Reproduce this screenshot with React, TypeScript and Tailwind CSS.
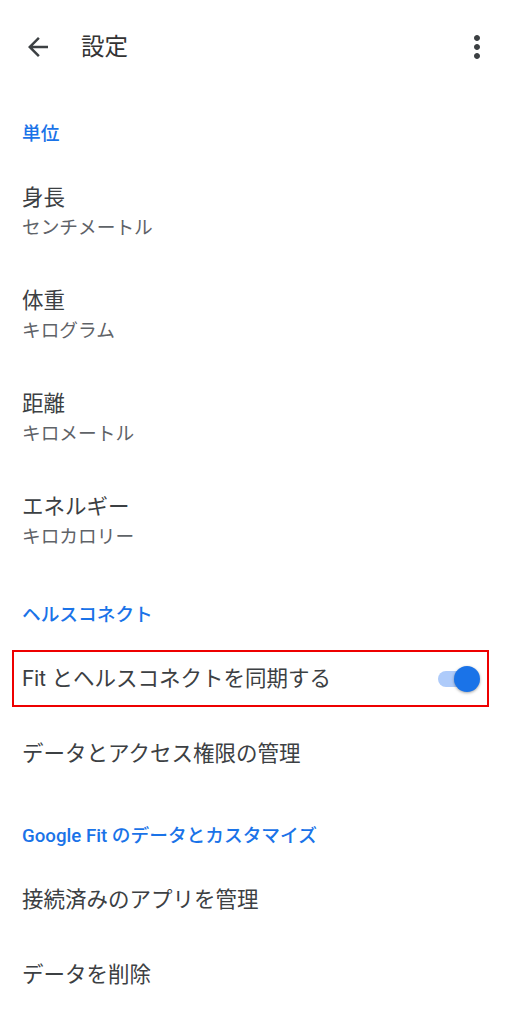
const FONT = "font-['Roboto','Noto_Sans_CJK_JP',sans-serif]"

function SectionLabel({ text, className }: { text: string; className: string }) {
  return (
    <div className={`flex items-start pl-[22px] ${className}`}>
      <span className="text-[18.7px] leading-[24px] font-medium text-[#1a73e8]">{text}</span>
    </div>
  )
}

function TwoLine({ title, sub }: { title: string; sub: string }) {
  return (
    <div className="flex h-[103px] flex-col justify-center pl-[22px]">
      <span className="text-[21.5px] leading-[28px] text-[#3c4043]">{title}</span>
      <span className="mt-1 text-[18.7px] leading-[24px] text-[#5f6368]">{sub}</span>
    </div>
  )
}

function OneLine({ title, className }: { title: string; className: string }) {
  return (
    <div className={`flex items-center pl-[22px] ${className}`}>
      <span className="text-[21.5px] leading-[28px] text-[#3c4043]">{title}</span>
    </div>
  )
}

export default function App() {
  return (
    <div className={`${FONT} h-[1024px] w-[507px] overflow-hidden bg-white`}>
      {/* App bar */}
      <div className="relative flex h-[94px] items-center">
        <svg viewBox="0 0 24 24" className="ml-[23px] h-[30px] w-[30px] fill-[#3c4043]">
          <path d="M20 11H7.83l5.59-5.59L12 4l-8 8 8 8 1.41-1.41L7.83 13H20v-2z" />
        </svg>
        <span className="ml-[28px] text-[23.5px] leading-[30px] text-[#333]">設定</span>
        <svg viewBox="0 0 24 24" className="absolute left-[459px] top-[29px] h-[36px] w-[36px] fill-[#3c4043]">
          <path d="M12 8c1.1 0 2-.9 2-2s-.9-2-2-2-2 .9-2 2 .9 2 2 2zm0 2c-1.1 0-2 .9-2 2s.9 2 2 2 2-.9 2-2-.9-2-2-2zm0 6c-1.1 0-2 .9-2 2s.9 2 2 2 2-.9 2-2-.9-2-2-2z" />
        </svg>
      </div>

      <SectionLabel text="単位" className="h-[66px] pt-[28px]" />
      <TwoLine title="身長" sub="センチメートル" />
      <TwoLine title="体重" sub="キログラム" />
      <TwoLine title="距離" sub="キロメートル" />
      <TwoLine title="エネルギー" sub="キロカロリー" />

      <SectionLabel text="ヘルスコネクト" className="h-[78px] pt-[31px]" />

      {/* Highlighted sync row */}
      <div className="ml-[12px] flex h-[57px] w-[477px] items-center justify-between border-2 border-[#ee0000] pl-[8px] pr-[7px]">
        <span className="text-[21.5px] leading-[28px] text-[#3c4043]">Fit とヘルスコネクトを同期する</span>
        <div className="relative h-[26px] w-[42px]">
          <div className="absolute left-0 top-[5px] h-[16px] w-[36px] rounded-full bg-[#aecbfa]" />
          <div className="absolute right-0 top-0 h-[26px] w-[26px] rounded-full bg-[#1a73e8] shadow-[0_1px_3px_rgba(0,0,0,0.35)]" />
        </div>
      </div>

      <OneLine title="データとアクセス権限の管理" className="h-[93px]" />
      <SectionLabel text="Google Fit のデータとカスタマイズ" className="h-[60px] pt-[24px]" />
      <OneLine title="接続済みのアプリを管理" className="h-[80px]" />
      <OneLine title="データを削除" className="h-[70px]" />
    </div>
  )
}
